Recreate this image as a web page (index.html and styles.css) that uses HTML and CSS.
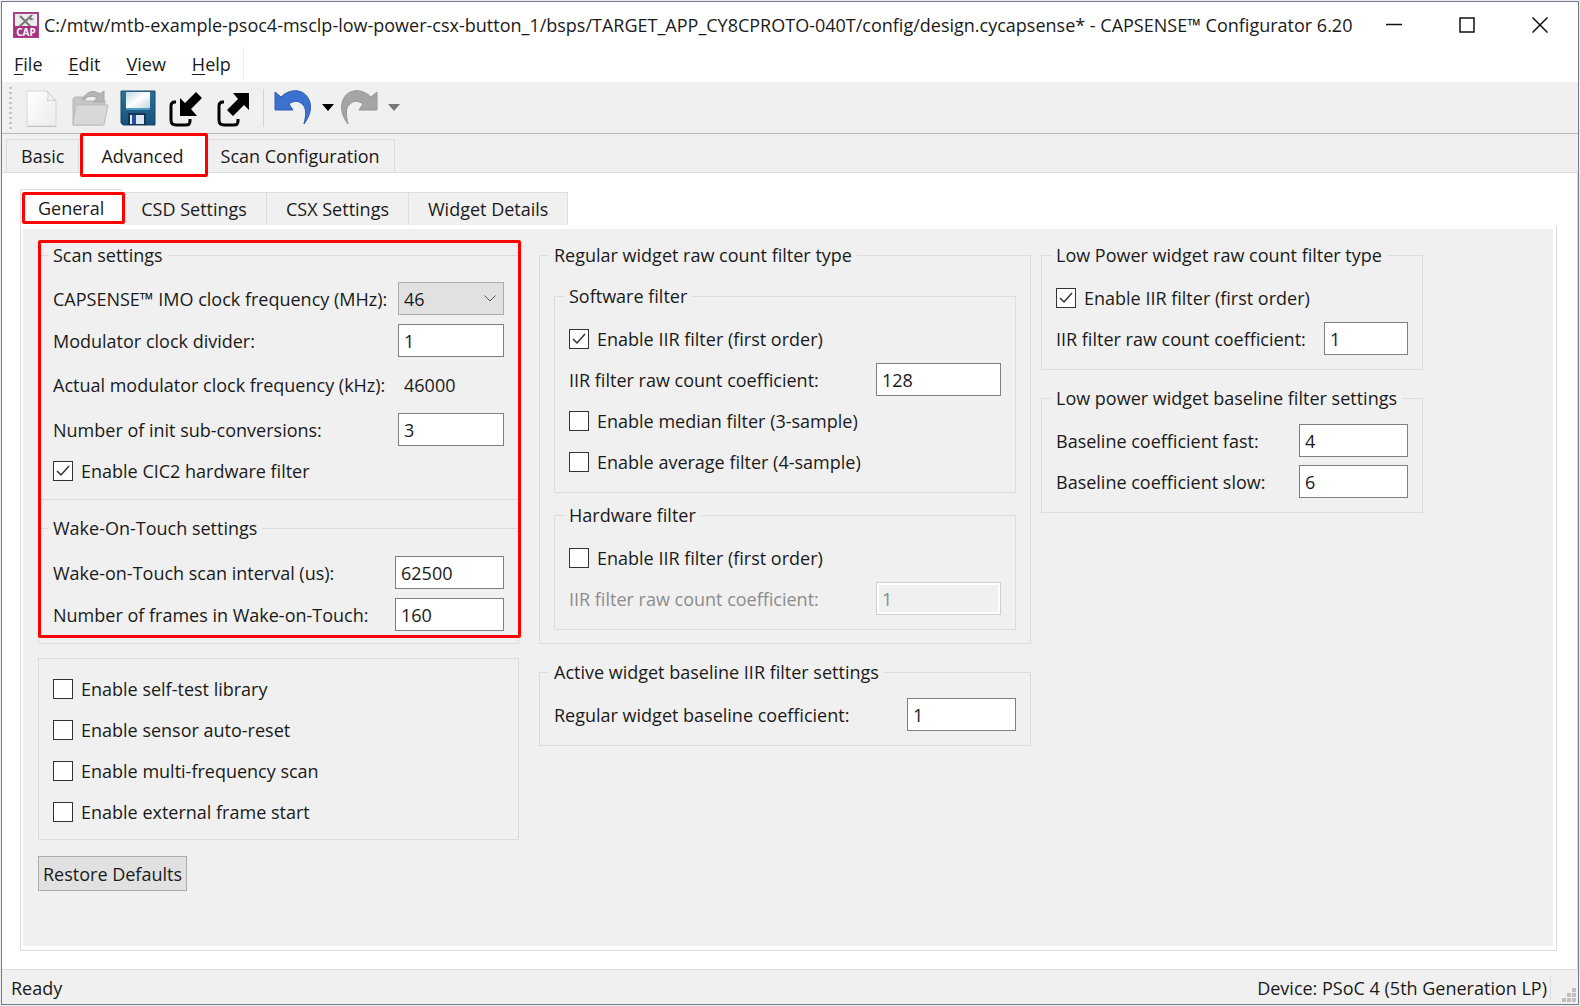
FILE: index.html
```html
<!DOCTYPE html>
<html lang="en">
<head>
<meta charset="utf-8">
<title>CAPSENSE™ Configurator 6.20</title>
<link rel="stylesheet" href="styles.css">
</head>
<body>
<div class="window">
  <header class="titlebar">
    <svg class="app-icon" viewBox="0 0 26 26" aria-hidden="true">
      <rect x="1" y="1" width="24" height="24" fill="#ececec" stroke="#a8428a" stroke-width="2"/>
      <path d="M7 4l11 11M18 4L6 15" stroke="#777" stroke-width="2" fill="none"/>
      <path d="M16 5a3 3 0 0 1 4-2l-2 2 1 2 2-1a3 3 0 0 1-4 2z" fill="#777"/>
      <rect x="1" y="14" width="24" height="11" fill="#a8327f"/>
      <text x="13" y="24" text-anchor="middle" class="app-icon-text">CAP</text>
    </svg>
    <h1 class="title">C:/mtw/mtb-example-psoc4-msclp-low-power-csx-button_1/bsps/TARGET_APP_CY8CPROTO-040T/config/design.cycapsense* - CAPSENSE™ Configurator 6.20</h1>
    <div class="window-buttons">
      <button type="button" aria-label="Minimize"><svg viewBox="0 0 16 16"><path d="M0 7.500h16"/></svg></button>
      <button type="button" aria-label="Maximize"><svg viewBox="0 0 16 16"><path d="M1 1h14v14H1z"/></svg></button>
      <button type="button" aria-label="Close"><svg viewBox="0 0 16 16"><path d="M0.500 0.500l15 15M15.500 0.500l-15 15"/></svg></button>
    </div>
  </header>

  <nav class="menubar" aria-label="Menu">
    <button type="button"><u>F</u>ile</button>
    <button type="button"><u>E</u>dit</button>
    <button type="button"><u>V</u>iew</button>
    <button type="button"><u>H</u>elp</button>
  </nav>

  <div class="toolbar" role="toolbar" aria-label="Tools">
    <span class="handle"></span>
    <button type="button" aria-label="New"><svg viewBox="0 0 38 38">
      <defs><linearGradient id="paper" x1="0" y1="0" x2="1" y2="1"><stop offset="0" stop-color="#fff"/><stop offset="1" stop-color="#ececec"/></linearGradient></defs>
      <path d="M4 2h20l9 10v25H4z" fill="url(#paper)" stroke="#d6d6d6"/>
      <path d="M24 2c2 3 1 7 0 10 3-1 7-1 9 0z" fill="#f4f4f4" stroke="#cfcfcf"/>
      <path d="M4 37.500h29" stroke="#c2c2c2"/></svg></button>
    <button type="button" aria-label="Open"><svg viewBox="0 0 38 38">
      <path d="M2 36V10l2-2h9l2 4h19v8L30 36z" fill="#c6c6c6" stroke="#b4b4b4"/>
      <path d="M12 11C14 3 22 0 29 5l4-3v11H22l4-4c-5-3-9-2-14 2z" fill="#b5b5b5" stroke="#a5a5a5"/>
      <path d="M5 16h32l-4 20H2z" fill="#d8d8d8" stroke="#bdbdbd"/></svg></button>
    <button type="button" aria-label="Save"><svg viewBox="0 0 38 38">
      <defs><linearGradient id="disk" x1="0" y1="0" x2="0" y2="1"><stop offset="0" stop-color="#2f7196"/><stop offset="1" stop-color="#14527c"/></linearGradient>
      <linearGradient id="label" x1="0" y1="0" x2="1" y2="1"><stop offset="0" stop-color="#b9d5e2"/><stop offset=".5" stop-color="#fff"/><stop offset="1" stop-color="#bfd7e2"/></linearGradient></defs>
      <path d="M2 2h34v34H4l-2-2z" fill="url(#disk)" stroke="#174867"/>
      <path d="M7 3h24v16H7z" fill="url(#label)"/>
      <path d="M7 19h24v2H7z" fill="#4d9bc4"/>
      <path d="M9 24h18v12H9z" fill="#153453"/>
      <path d="M11 26h14v9H11z" fill="#dfe6f2"/><path d="M13 26h4v9h-4z" fill="#2450a0"/></svg></button>
    <button type="button" aria-label="Import"><svg viewBox="0 0 38 38">
      <path d="M9 13H8q-4 0-4 4v14q0 5 5 5h10q4 0 4-4v-2" fill="none" stroke="#000" stroke-width="3"/>
      <path d="M13 27V9l5 5L29 3l6 6-11 11 6 7z"/></svg></button>
    <button type="button" aria-label="Export"><svg viewBox="0 0 38 38">
      <path d="M9 13H8q-4 0-4 4v14q0 5 5 5h10q4 0 4-4v-2" fill="none" stroke="#000" stroke-width="3"/>
      <path d="M34 4v17l-5-5-11 11-6-6 11-11-5-6z"/></svg></button>
    <span class="separator"></span>
    <button type="button" aria-label="Undo"><svg viewBox="0 0 38 38">
      <path d="M1 3l6 5C16-1 29 0 34 9c5 8 2 18-4 26 2-9 3-16-2-20-4-4-9-3-13 0l4 6H1z" fill="#3b72d0" stroke="#2a5cb4"/></svg></button>
    <button type="button" class="drop" aria-label="Undo list"><svg viewBox="0 0 12 7"><path d="M0 0h12L6 7z" fill="#000"/></svg></button>
    <button type="button" aria-label="Redo"><svg viewBox="0 0 38 38">
      <path d="M37 3l-6 5C22-1 9 0 4 9c-5 8-2 18 4 26-2-9-3-16 2-20 4-4 9-3 13 0l-4 6h18z" fill="#a5a5a5" stroke="#949494"/></svg></button>
    <button type="button" class="drop" aria-label="Redo list"><svg viewBox="0 0 12 7"><path d="M0 0h12L6 7z" fill="#777"/></svg></button>
  </div>

  <div class="tabs main-tabs" role="tablist">
    <button type="button" role="tab" class="tab">Basic</button>
    <button type="button" role="tab" class="tab selected" aria-selected="true">Advanced</button>
    <button type="button" role="tab" class="tab">Scan Configuration</button>
  </div>

  <main class="page">
    <div class="tabs sub-tabs" role="tablist">
      <button type="button" role="tab" class="tab selected" aria-selected="true">General</button>
      <button type="button" role="tab" class="tab">CSD Settings</button>
      <button type="button" role="tab" class="tab">CSX Settings</button>
      <button type="button" role="tab" class="tab">Widget Details</button>
    </div>
    <div class="pane">
      <form class="panel">
        <div class="column">
          <div class="stack callout">
            <fieldset class="group scan">
              <legend>Scan settings</legend>
              <div class="row field"><label for="imo">CAPSENSE™ IMO clock frequency (MHz):</label>
                <span class="combo"><select id="imo"><option>46</option></select><svg viewBox="0 0 12 7" aria-hidden="true"><path d="M0.500 0.500L6 6l5.500-5.500"/></svg></span></div>
              <div class="row field"><label for="div">Modulator clock divider:</label><input type="text" class="w106" id="div" value="1"></div>
              <div class="row readout"><span>Actual modulator clock frequency (kHz):</span><output class="w106">46000</output></div>
              <div class="row field"><label for="init">Number of init sub-conversions:</label><input type="text" class="w106" id="init" value="3"></div>
              <label class="check"><input type="checkbox" checked>Enable CIC2 hardware filter</label>
            </fieldset>
            <fieldset class="group wake">
              <legend>Wake-On-Touch settings</legend>
              <div class="row field"><label for="wot">Wake-on-Touch scan interval (us):</label><input type="text" class="w109" id="wot" value="62500"></div>
              <div class="row field"><label for="frames">Number of frames in Wake-on-Touch:</label><input type="text" class="w109" id="frames" value="160"></div>
            </fieldset>
          </div>
          <fieldset class="group options" aria-label="Options">
            <label class="check row"><input type="checkbox">Enable self-test library</label>
            <label class="check row"><input type="checkbox">Enable sensor auto-reset</label>
            <label class="check row"><input type="checkbox">Enable multi-frequency scan</label>
            <label class="check row"><input type="checkbox">Enable external frame start</label>
          </fieldset>
          <button type="button" class="restore">Restore Defaults</button>
        </div>

        <div class="column">
          <fieldset class="group outer">
            <legend>Regular widget raw count filter type</legend>
            <fieldset class="group">
              <legend>Software filter</legend>
              <label class="check row"><input type="checkbox" checked>Enable IIR filter (first order)</label>
              <div class="row"><label for="sw">IIR filter raw count coefficient:</label><input type="text" class="w125" id="sw" value="128"></div>
              <label class="check row"><input type="checkbox">Enable median filter (3-sample)</label>
              <label class="check row"><input type="checkbox">Enable average filter (4-sample)</label>
            </fieldset>
            <fieldset class="group">
              <legend>Hardware filter</legend>
              <label class="check row"><input type="checkbox">Enable IIR filter (first order)</label>
              <div class="row"><label for="hw" class="dim">IIR filter raw count coefficient:</label><input type="text" class="w125" id="hw" value="1" disabled></div>
            </fieldset>
          </fieldset>
          <fieldset class="group">
            <legend>Active widget baseline IIR filter settings</legend>
            <div class="row"><label for="reg">Regular widget baseline coefficient:</label><input type="text" class="w109" id="reg" value="1"></div>
          </fieldset>
        </div>

        <div class="column">
          <fieldset class="group">
            <legend>Low Power widget raw count filter type</legend>
            <label class="check row"><input type="checkbox" checked>Enable IIR filter (first order)</label>
            <div class="row"><label for="lp">IIR filter raw count coefficient:</label><input type="text" class="w84" id="lp" value="1"></div>
          </fieldset>
          <fieldset class="group">
            <legend>Low power widget baseline filter settings</legend>
            <div class="row"><label for="fast">Baseline coefficient fast:</label><input type="text" class="w109" id="fast" value="4"></div>
            <div class="row"><label for="slow">Baseline coefficient slow:</label><input type="text" class="w109" id="slow" value="6"></div>
          </fieldset>
        </div>
      </form>
    </div>
  </main>

  <footer class="statusbar">
    <span class="state">Ready</span>
    <span class="device">Device: PSoC 4 (5th Generation LP)</span>
    <svg class="grip" viewBox="0 0 14 14" aria-hidden="true"><path d="M10 0h4v4h-4zM5 5h4v4H5zM10 5h4v4h-4zM0 10h4v4H0zM5 10h4v4H5zM10 10h4v4h-4z"/></svg>
  </footer>
</div>
</body>
</html>
```
FILE: styles.css
```css
* { box-sizing: border-box; }

:root {
  --face: #f0f0f0;
  --line: #dcdcdc;
  --ink: #1a1a1a;
  --mark: #ff0000;
}

body {
  margin: 0;
  background: #e9edf0;
  color: var(--ink);
  font: 18px/24px "Open Sans", "Noto Sans", sans-serif;
}

button, input, select, output { font: inherit; color: inherit; }
button { border: 0; background: none; padding: 0; }

.window {
  display: flex;
  flex-direction: column;
  min-height: calc(100vh - 2px);
  margin: 1px;
  border: 1px solid #77798c;
  background: #fff;
}

/* Title bar and menu */
.titlebar { display: flex; align-items: center; height: 45px; padding: 0 2px 0 11px; }
.app-icon { width: 26px; height: 26px; flex: none; }
.app-icon-text { font: bold 10px "Open Sans", sans-serif; fill: #fff; }
.title { flex: 1; margin: 0 0 0 5px; font-size: 18px; font-weight: 400; white-space: nowrap; }
.window-buttons { display: flex; }
.window-buttons button { display: grid; place-items: center; width: 73px; height: 44px; }
.window-buttons svg { width: 16px; height: 16px; fill: none; stroke: #111; stroke-width: 1.500; }

.menubar { display: flex; align-self: flex-start; gap: 26px; height: 33px; padding: 0 12px; margin-bottom: 2px; border-right: 1px solid #ededed; }
.menubar u { text-underline-offset: 3px; text-decoration-thickness: 1px; }

/* Toolbar */
.toolbar { display: flex; align-items: center; height: 52px; padding: 0 7px; background: var(--face); border-bottom: 1px solid #b8b8b8; }
.toolbar button { width: 38px; height: 38px; margin-right: 10px; }
.toolbar svg { display: block; width: 100%; height: 100%; }
.toolbar .handle { width: 3px; height: 42px; margin-right: 11px; background: repeating-linear-gradient(#c4c4c4 0 2px, var(--face) 2px 5px); }
.toolbar .separator { width: 1px; height: 38px; margin-right: 10px; background: #d4d4d4; }
.toolbar .drop { width: 12px; height: 7px; margin-right: 6px; }

/* Tabs */
.tabs { display: flex; align-items: flex-end; }
.tab { position: relative; height: 33px; border: 1px solid var(--line); border-bottom: 0; background: var(--face); text-align: center; }
.tab + .tab { border-left: 0; }
.tab.selected { background: #fff; z-index: 1; }
.main-tabs { height: 39px; padding-left: 4px; background: var(--face); border-bottom: 1px solid var(--line); }
.main-tabs .tab { padding: 0 14px; }
.main-tabs .selected { padding: 0 22px; }
.sub-tabs .tab { padding: 0 19px; }
.sub-tabs .selected { padding: 0 17px; height: 36px; }

/* Red call-out frames lie over the controls they point at */
.tab.selected::after, .callout::after {
  content: "";
  position: absolute;
  border: 3px solid var(--mark);
  border-radius: 2px;
  pointer-events: none;
}
.main-tabs .selected::after { inset: -7px -2px -5px 1px; background: #fff; z-index: -1; }
.sub-tabs .selected::after { inset: 2px -4px 1px 1px; background: #fff; z-index: -1; }
.callout { position: relative; }
.callout::after { inset: -1px -2px 6px 0; }

/* Page */
.page { flex: 1; display: flex; flex-direction: column; padding: 16px 20px 18px 18px; border-right: 1px solid var(--line); }
.pane { flex: 1; display: flex; padding: 4px 3px 4px 2px; border: 1px solid var(--line); border-top: 0; }
.panel {
  flex: 1;
  display: grid;
  grid-template-columns: minmax(0, 481px) minmax(0, 492px) minmax(0, 382px);
  align-items: start;
  padding: 12px 15px;
  background: var(--face);
}
.column, .stack { display: flex; flex-direction: column; gap: 14px; }
.column:nth-child(2) { margin: 0 -20px 0 20px; }
.column:nth-child(3) { margin: 0 -30px 0 30px; }

.group { min-width: 0; margin: 0; padding: 8px 14px 10px; border: 1px solid var(--line); }
.group legend { height: 28px; margin-left: -5px; padding: 2px 5px; }
.outer { padding: 13px 14px; }
.outer .group + .group { margin-top: 8px; }
.scan { display: grid; gap: 9px; padding: 13px 14px 12px; }
.wake { display: grid; gap: 9px; padding: 14px 14px 12px; }
.options { padding: 9px 14px 7px; }

.row { display: flex; align-items: center; justify-content: space-between; height: 41px; white-space: nowrap; }
.field { height: 33px; }
.readout { height: 38px; }
.check { display: flex; align-items: center; justify-content: flex-start; gap: 8px; white-space: nowrap; }
.scan .check { height: 32px; }
.dim { color: #8c8c8c; }

input[type="text"], select, output { height: 33px; padding: 0 5px; }
input[type="text"] { border: 1px solid #7f7f7f; background: #fff; border-radius: 0; }
input[type="text"]:disabled { border-color: #cfcfcf; background: var(--face); color: #8c8c8c; box-shadow: inset 0 0 0 2px #fff; }
output { padding: 4px 6px; }
.w84 { width: 84px; }
.w106 { width: 106px; }
.w109 { width: 109px; }
.w125 { width: 125px; }

.combo { display: grid; align-items: center; width: 106px; }
.combo > * { grid-area: 1 / 1; }
.combo select { appearance: none; width: 100%; border: 1px solid #adadad; border-radius: 0; background: #e1e1e1; }
.combo svg { justify-self: end; width: 12px; height: 7px; margin-right: 8px; fill: none; stroke: #555; pointer-events: none; }

input[type="checkbox"] { appearance: none; flex: none; width: 20px; height: 20px; margin: 0; border: 1px solid #333; background: #fff; }
input[type="checkbox"]:checked { background: #fff url("data:image/svg+xml,%3Csvg xmlns='http://www.w3.org/2000/svg' viewBox='0 0 18 18'%3E%3Cpath d='M3 9l4 4 8-9' fill='none' stroke='%23333' stroke-width='1.500'/%3E%3C/svg%3E"); }

.restore { align-self: flex-start; height: 35px; margin-top: 2px; padding: 0 4px; border: 1px solid #adadad; background: #e1e1e1; }

/* Status bar */
.statusbar { display: flex; align-items: center; height: 35px; padding: 2px 2px 0 9px; background: var(--face); border-top: 1px solid var(--line); }
.device { margin-left: auto; padding-right: 3px; border-right: 1px solid var(--line); }
.grip { align-self: flex-end; width: 14px; height: 14px; margin: 0 0 2px 11px; fill: #c0c0c0; }
```
